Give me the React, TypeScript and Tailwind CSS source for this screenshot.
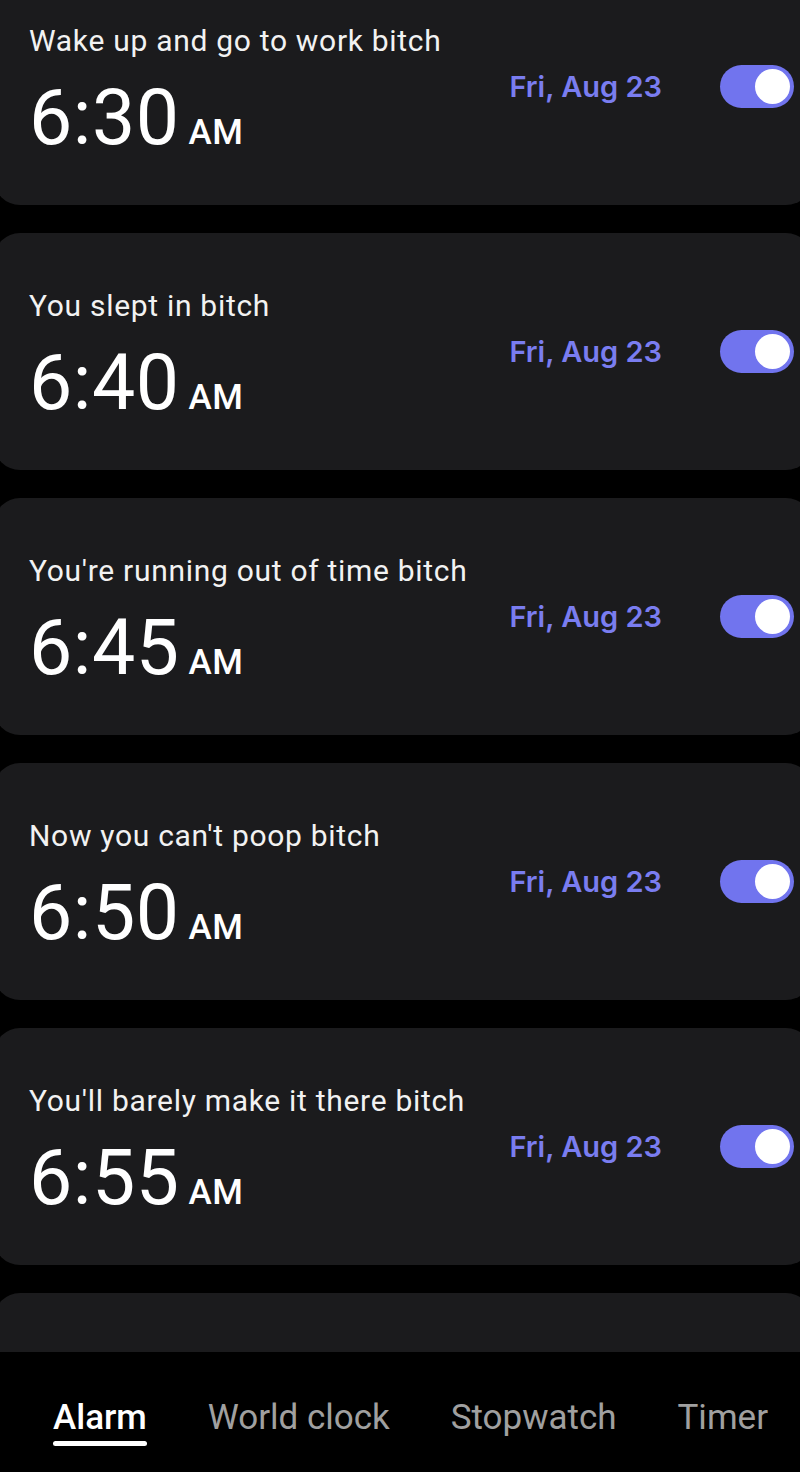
// Alarm list (clock app) — static mock
const ALARMS = [
  { label: 'Wake up and go to work bitch', time: '6:30' },
  { label: 'You slept in bitch', time: '6:40' },
  { label: "You're running out of time bitch", time: '6:45' },
  { label: "Now you can't poop bitch", time: '6:50' },
  { label: "You'll barely make it there bitch", time: '6:55' },
]

const TABS = ['Alarm', 'World clock', 'Stopwatch', 'Timer']

export default function App() {
  return (
    <div className="w-[800px] h-[1472px] bg-black overflow-hidden flex flex-col font-['Roboto',sans-serif]">
      <main className="h-[1352px] shrink-0 overflow-hidden">
        <div className="mt-[-32px] ml-[-6px] w-[818px] flex flex-col gap-[28px]">
          {ALARMS.map((a) => <AlarmCard key={a.time} label={a.label} time={a.time} />)}
          <div className="h-[237px] rounded-[26px] bg-[#1b1b1d]" />
        </div>
      </main>
      <TabBar />
    </div>
  )
}

function AlarmCard({ label, time }: { label: string; time: string }) {
  return (
    <div className="h-[237px] rounded-[26px] bg-[#1b1b1d] flex items-center pl-[35px] pr-[18px]">
      <div className="self-stretch flex-1 min-w-0 pt-[58px]">
        <div className="text-[30px] leading-none text-[#f2f2f2] whitespace-nowrap tracking-[0.7px]">{label}</div>
        <div className="mt-[24px] flex items-baseline gap-[9px] text-white">
          <span className="text-[77px] leading-none font-normal tracking-[0.5px]">{time}</span>
          <span className="text-[35px] leading-none font-medium tracking-[0.5px]">AM</span>
        </div>
      </div>
      <div className="flex items-center gap-[58px]">
        <span className="font-['Inter',sans-serif] text-[29px] leading-none font-semibold text-[#7a7df0] whitespace-nowrap">Fri, Aug 23</span>
        <Toggle />
      </div>
    </div>
  )
}

function Toggle() {
  return (
    <span className="w-[74px] h-[43px] rounded-full bg-[#7174ee] flex items-center justify-end pr-[4px]">
      <span className="w-[35px] h-[35px] rounded-full bg-white" />
    </span>
  )
}

function TabBar() {
  return (
    <nav className="flex-1 bg-black flex justify-between items-start pl-[53px] pr-[32px] pt-[48px]">
      {TABS.map((t, i) => (
        <div key={t} className="flex flex-col">
          <span className={`text-[35px] leading-none whitespace-nowrap ${i === 0 ? 'text-white font-medium' : 'text-[#a0a0a0]'}`}>{t}</span>
          {i === 0 && <span className="mt-[6px] h-[5px] rounded-full bg-white" />}
        </div>
      ))}
    </nav>
  )
}
